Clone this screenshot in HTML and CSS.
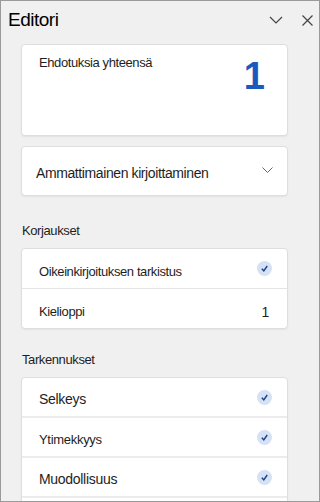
FILE: index.html
```html
<!DOCTYPE html>
<html lang="fi">
<head>
    <meta charset="UTF-8">
    <meta name="viewport" content="width=device-width, initial-scale=1.0">
    <title>Editori</title>
    <link rel="stylesheet" href="styles.css">
</head>
<body>

<div class="pane">
    <div class="pane-header">
        <h1 class="pane-title">Editori</h1>
        <div class="pane-actions">
            <svg class="icon-btn" width="14" height="8" viewBox="0 0 14 8"><path d="M1 1 L7 7 L13 1" fill="none" stroke="#444" stroke-width="1.2"/></svg>
            <svg class="icon-btn" width="11" height="11" viewBox="0 0 11 11"><path d="M0.5 0.5 L10.5 10.5 M10.5 0.5 L0.5 10.5" fill="none" stroke="#444" stroke-width="1.2"/></svg>
        </div>
    </div>

    <div class="content">
        <div class="card total">
            <span class="total-label">Ehdotuksia yhteensä</span>
            <span class="total-count">1</span>
        </div>

        <div class="card select">
            <span>Ammattimainen kirjoittaminen</span>
            <svg width="11" height="6" viewBox="0 0 11 6"><path d="M0.5 0.5 L5.5 5.5 L10.5 0.5" fill="none" stroke="#666" stroke-width="1"/></svg>
        </div>

        <h2 class="section-title">Korjaukset</h2>
        <div class="card list">
            <div class="row">
                <span class="row-label">Oikeinkirjoituksen tarkistus</span>
                <span class="check"><svg width="15" height="15" viewBox="0 0 15 15"><circle cx="7.5" cy="7.5" r="7.5" fill="#d5e1f4"/><path d="M4.8 7.8 L6.8 9.8 L10.2 5" fill="none" stroke="#1d3f86" stroke-width="1.4"/></svg></span>
            </div>
            <div class="row">
                <span class="row-label">Kielioppi</span>
                <span class="count">1</span>
            </div>
        </div>

        <h2 class="section-title">Tarkennukset</h2>
        <div class="card list big">
            <div class="row">
                <span class="row-label">Selkeys</span>
                <span class="check"><svg width="15" height="15" viewBox="0 0 15 15"><circle cx="7.5" cy="7.5" r="7.5" fill="#d5e1f4"/><path d="M4.8 7.8 L6.8 9.8 L10.2 5" fill="none" stroke="#1d3f86" stroke-width="1.4"/></svg></span>
            </div>
            <div class="row">
                <span class="row-label small">Ytimekkyys</span>
                <span class="check"><svg width="15" height="15" viewBox="0 0 15 15"><circle cx="7.5" cy="7.5" r="7.5" fill="#d5e1f4"/><path d="M4.8 7.8 L6.8 9.8 L10.2 5" fill="none" stroke="#1d3f86" stroke-width="1.4"/></svg></span>
            </div>
            <div class="row">
                <span class="row-label">Muodollisuus</span>
                <span class="check"><svg width="15" height="15" viewBox="0 0 15 15"><circle cx="7.5" cy="7.5" r="7.5" fill="#d5e1f4"/><path d="M4.8 7.8 L6.8 9.8 L10.2 5" fill="none" stroke="#1d3f86" stroke-width="1.4"/></svg></span>
            </div>
            <div class="row"></div>
        </div>
    </div>
</div>

</body>
</html>
```

FILE: styles.css
```css
html, body {
    margin: 0;
    padding: 0;
}
body {
    font-family: "Liberation Sans", Arial, sans-serif;
    color: #1e1e1e;
    letter-spacing: -0.4px;
}
.pane {
    height: 502px;
    box-sizing: border-box;
    border: 1px solid #9a9a9a;
    background-color: #f0f0f0;
    overflow: hidden;
}
.pane-header {
    display: flex;
    align-items: center;
    justify-content: space-between;
    padding: 7px 6px 0 7px;
    height: 24px;
}
.pane-title {
    margin: 0;
    font-size: 19px;
    font-weight: normal;
    line-height: 24px;
    letter-spacing: -0.5px;
    color: #000;
}
.pane-actions {
    display: flex;
    align-items: center;
    gap: 19px;
}
.content {
    padding: 12px 31px 0 20px;
}
.card {
    background-color: #fff;
    border: 1px solid #dedede;
    border-radius: 4px;
    box-shadow: 0 1px 2px rgba(0, 0, 0, 0.06);
}
.total {
    height: 90px;
    display: flex;
    justify-content: space-between;
    align-items: flex-start;
    padding: 0 22px 0 17px;
}
.total-label {
    font-size: 13px;
    line-height: 16px;
    margin-top: 10px;
}
.total-count {
    font-size: 38px;
    font-weight: bold;
    line-height: 39px;
    letter-spacing: 0;
    color: #185abd;
    margin-top: 12px;
}
.select {
    margin-top: 10px;
    height: 48px;
    display: flex;
    align-items: center;
    justify-content: space-between;
    padding: 0 14px 0 14px;
    font-size: 14px;
}
.select span {
    margin-top: 4px;
}
.select svg {
    margin-bottom: 2px;
}
.section-title {
    margin: 27px 0 9px 1px;
    font-size: 13px;
    font-weight: normal;
    line-height: 16px;
}
.list + .section-title {
    margin-top: 23px;
}
.row {
    display: flex;
    align-items: center;
    justify-content: space-between;
    height: 39px;
    padding: 0 15px 0 17px;
    font-size: 13px;
    border-top: 1px solid #e4e4e4;
}
.row:first-child {
    border-top: none;
}
.row-label {
    margin-top: 6px;
}
.check {
    display: flex;
}
.count {
    margin-top: 6px;
    margin-right: 3px;
    font-size: 14px;
}
.big .row {
    font-size: 14px;
    letter-spacing: -0.3px;
    height: 38px;
    border-top: 2px solid #ececec;
}
.big .row:first-child {
    border-top: none;
}
.big .row-label {
    margin-top: 4px;
}
.big .row-label.small {
    font-size: 13px;
}
```
